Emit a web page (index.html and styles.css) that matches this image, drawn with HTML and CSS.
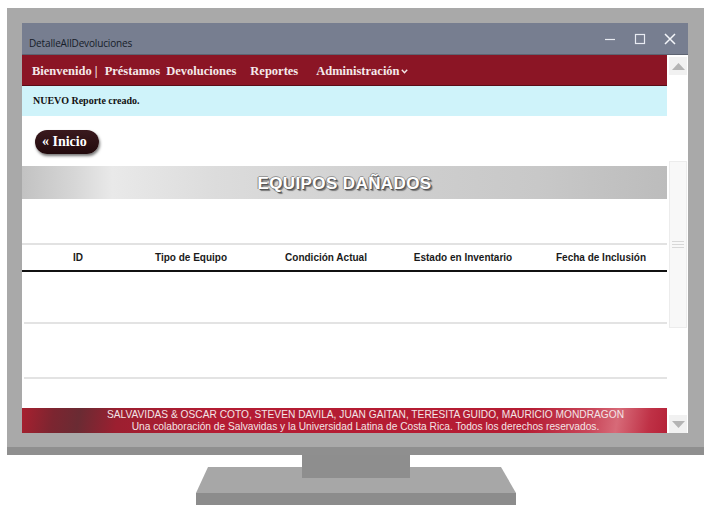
FILE: index.html
```html
<!DOCTYPE html>
<html lang="es">
<head>
<meta charset="utf-8">
<title>DetalleAllDevoluciones</title>
<link rel="stylesheet" href="styles.css">
</head>
<body>
<div class="monitor">
  <div class="bezel">
    <div class="window">
      <div class="titlebar">
        <span class="title">DetalleAllDevoluciones</span>
        <div class="controls">
          <svg class="ctl" width="12" height="12" viewBox="0 0 12 12"><path d="M1 6.5H11" stroke="#e8ebf2" stroke-width="1.2"/></svg>
          <svg class="ctl" width="12" height="12" viewBox="0 0 12 12"><rect x="1.5" y="1.5" width="9" height="9" fill="none" stroke="#e8ebf2" stroke-width="1.2"/></svg>
          <svg class="ctl" width="12" height="12" viewBox="0 0 12 12"><path d="M1 1L11 11M11 1L1 11" stroke="#f4f6fa" stroke-width="1.5"/></svg>
        </div>
      </div>
      <div class="body">
        <div class="page">
          <nav class="nav">
            <a class="nav-item nav-bien">Bienvenido |</a>
            <a class="nav-item nav-pres">Préstamos</a>
            <a class="nav-item">Devoluciones</a>
            <a class="nav-item nav-rep">Reportes</a>
            <a class="nav-item nav-adm">Administración<svg class="chev" width="7" height="5" viewBox="0 0 7 5"><path d="M0.8 0.8L3.5 3.8L6.2 0.8" fill="none" stroke="#f4e8e8" stroke-width="1.4"/></svg></a>
          </nav>
          <div class="alert">NUEVO Reporte creado.</div>
          <div class="btn-row"><a class="btn">« Inicio</a></div>
          <h1 class="heading">EQUIPOS DAÑADOS</h1>
          <div class="table">
            <div class="thead">
              <div class="th">ID</div>
              <div class="th">Tipo de Equipo</div>
              <div class="th">Condición Actual</div>
              <div class="th">Estado en Inventario</div>
              <div class="th th-last">Fecha de Inclusión</div>
            </div>
            <div class="row"></div>
            <div class="row row-2"></div>
          </div>
          <footer class="footer">
            <div>SALVAVIDAS &amp; OSCAR COTO, STEVEN DAVILA, JUAN GAITAN, TERESITA GUIDO, MAURICIO MONDRAGON</div>
            <div>Una colaboración de Salvavidas y la Universidad Latina de Costa Rica. Todos los derechos reservados.</div>
          </footer>
        </div>
        <div class="scrollbar">
          <div class="arrow"><svg width="13" height="7" viewBox="0 0 13 7"><path d="M0 7L6.5 0L13 7Z" fill="#b4b4b4"/></svg></div>
          <div class="thumb"><span class="grip"></span><span class="grip"></span><span class="grip"></span></div>
          <div class="arrow arrow-down"><svg width="13" height="7" viewBox="0 0 13 7"><path d="M0 0L6.5 7L13 0Z" fill="#b4b4b4"/></svg></div>
        </div>
      </div>
    </div>
  </div>
  <div class="chin"></div>
  <svg class="stand" width="320" height="50" viewBox="0 0 320 50">
    <polygon points="12,12 305,12 320,38 0,38" fill="#a7a7a7"/>
    <rect x="0" y="38" width="320" height="12" fill="#8c8c8c"/>
    <rect x="106" y="0" width="108" height="23" fill="#8e8e8e"/>
  </svg>
</div>
</body>
</html>
```
FILE: styles.css
```css
* { box-sizing: border-box; }
html, body { margin: 0; padding: 0; background: #ffffff; }
body { font-family: "Liberation Sans", Arial, sans-serif; }

.monitor { margin: 8px 0 0 7px; width: 697px; }
.bezel { background: #a9a9a9; padding: 15px 16px 14px 15px; }
.chin { height: 8px; background: #8f8f8f; }
.stand { display: block; margin-left: 189px; }

.window { width: 666px; height: 410px; background: #ffffff; display: flex; flex-direction: column; }
.titlebar { height: 32px; background: #777e90; display: flex; align-items: center; justify-content: space-between; padding: 0 12px 0 7px; border-bottom: 1px solid #5d6371; }
.title { font-family: "Open Sans", "Noto Sans", sans-serif; font-size: 10px; color: #161c28; padding-top: 8px; letter-spacing: -0.15px; }
.controls { display: flex; gap: 18px; align-items: center; }
.ctl { display: block; }

.body { flex: 1; display: flex; min-height: 0; }
.page { width: 645px; display: flex; flex-direction: column; }

.nav { height: 31px; background: #8b1525; border-bottom: 1px solid #5a0c16; display: flex; align-items: center; padding-left: 10px; padding-top: 2px; font-family: "Liberation Serif", "Times New Roman", serif; font-weight: bold; font-size: 12.5px; color: #f5e9ea; }
.nav-item { margin-right: 8px; white-space: nowrap; }
.nav-bien { margin-right: 7px; }
.nav-pres { margin-right: 6px; }
.nav-rep { margin-left: 6px; }
.nav-adm { margin-left: 10px; }
.chev { margin-left: 1px; vertical-align: 1px; }

.alert { height: 30px; background: #cff3fa; padding-left: 11px; line-height: 30px; font-family: "Liberation Serif", "Times New Roman", serif; font-weight: bold; font-size: 10px; color: #111; }

.btn-row { padding: 14px 0 0 13px; height: 38px; }
.btn { display: inline-block; height: 24px; width: 64px; line-height: 24px; padding-left: 7px; border-radius: 12px; background: linear-gradient(#3a1a1e, #220a0d); color: #ffffff; font-family: "Liberation Serif", "Times New Roman", serif; font-weight: bold; font-size: 14px; box-shadow: 1px 2px 3px rgba(0,0,0,0.55); white-space: nowrap; }

.heading { margin: 12px 0 0 0; height: 33px; line-height: 35px; text-align: center; font-family: "Liberation Sans", Arial, sans-serif; font-weight: bold; font-size: 17px; color: #ffffff; letter-spacing: 0.4px; background: linear-gradient(to right, #c2c2c2 0%, #d6d6d6 8%, #e9e9e9 14%, #dcdcdc 30%, #d0d0d0 55%, #c8c8c8 80%, #bcbcbc 100%); text-shadow: 1px 1px 0 #555, 2px 2px 1px #777, -1px 0 0 #888, 0 -1px 0 #999; }

.table { margin-top: 44px; }
.thead { display: grid; grid-template-columns: 112px 114px 156px 118px 145px; border-top: 2px solid #e2e2e2; border-bottom: 2px solid #111; height: 29px; align-items: center; }
.th { text-align: center; font-weight: bold; font-size: 10px; color: #1a1a1a; }
.th-last { padding-left: 13px; }
.row { height: 52px; margin-left: 2px; border-bottom: 2px solid #e3e3e3; }
.row-2 { height: 55px; }

.footer { margin-top: auto; height: 25px; padding-top: 1px; padding-left: 42px; text-align: center; font-size: 10.2px; line-height: 12px; color: #f3e4e6; background: linear-gradient(100deg, #a8202f 0%, #7c2530 5%, #6a2b33 9%, #9c1f30 15%, #b41c33 30%, #b51c33 78%, #c9475a 88%, #d76a78 92%, #bf3146 97%, #b52238 100%); }

.scrollbar { width: 21px; display: flex; flex-direction: column; align-items: center; padding: 2px 1px 0 2px; }
.arrow { width: 18px; height: 18px; background: #f1f1f1; display: flex; align-items: center; justify-content: center; }
.thumb { width: 18px; height: 167px; margin-top: 86px; background: #f8f8f8; border: 1px solid #ececec; display: flex; flex-direction: column; align-items: center; justify-content: center; gap: 2px; }
.grip { display: block; width: 12px; height: 1px; background: #d8d8d8; }
.arrow-down { margin-top: auto; }
```
